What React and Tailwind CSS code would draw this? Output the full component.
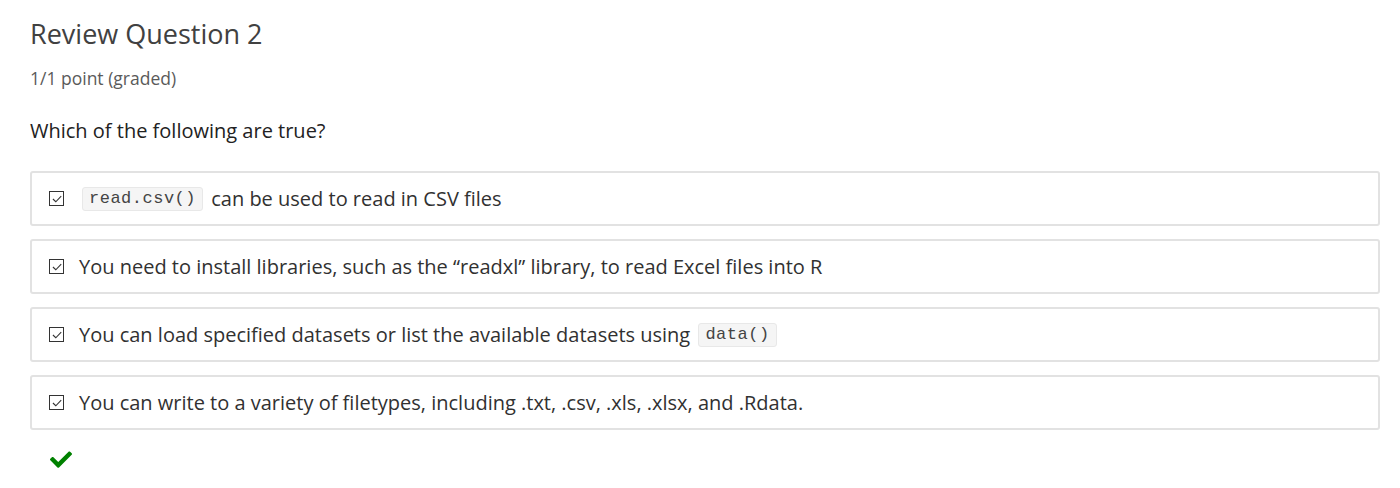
const options = [
  { id: 1, parts: [{ code: 'read.csv()' }, ' can be used to read in CSV files'] },
  { id: 2, parts: ['You need to install libraries, such as the \u201creadxl\u201d library, to read Excel files into R'] },
  { id: 3, parts: ['You can load specified datasets or list the available datasets using ', { code: 'data()' }] },
  { id: 4, parts: ['You can write to a variety of filetypes, including .txt, .csv, .xls, .xlsx, and .Rdata.'] },
]

function CheckBox() {
  return (
    <span className="flex h-[15px] w-[15px] shrink-0 items-center justify-center border border-[#333] bg-white">
      <svg width="12" height="12" viewBox="0 0 10 10" fill="none">
        <path d="M1.6 5 L4 7.3 L8.5 2.6" stroke="#333" strokeWidth="0.9" />
      </svg>
    </span>
  )
}

function Code({ children }) {
  return (
    <code className="mx-[3px] rounded-[3px] border border-[#e8e8e8] bg-[#f5f5f5] px-[6px] py-[2px] text-[17px] leading-[18px] text-[#444] tracking-[0.5px] [font-family:'Liberation_Mono',monospace]">
      {children}
    </code>
  )
}

export default function App() {
  return (
    <div className="min-h-screen bg-white px-[30px] pt-[14px] [font-family:'Open_Sans',sans-serif]">
      <h2 className="text-[27px] leading-[40px] text-[#414141]">Review Question 2</h2>
      <div className="mt-[12px] text-[17.5px] leading-[24px] text-[#5a5a5a]">1/1 point (graded)</div>
      <p className="mt-[27px] text-[20px] leading-[28px] text-[#222]">Which of the following are true?</p>

      <div className="mt-[26px] flex w-[1350px] flex-col gap-[13px]">
        {options.map((opt) => (
          <label
            key={opt.id}
            className="flex h-[55px] items-center rounded-[3px] border-2 border-[#e2e2e2] pl-[17px] text-[20px] text-[#313131]"
          >
            <CheckBox />
            <span className="ml-[15px] flex items-center whitespace-pre">
              {opt.parts.map((p, i) =>
                typeof p === 'string' ? <span key={i}>{p}</span> : <Code key={i}>{p.code}</Code>
              )}
            </span>
          </label>
        ))}
      </div>

      <div className="mt-[21px] pl-[20px]">
        <svg width="22" height="17" viewBox="0 0 512 390" fill="#008100">
          <path d="M173.9 381.4L7.5 215c-10-10-10-26.2 0-36.2l36.2-36.2c10-10 26.2-10 36.2 0L192 254.7 432.1 14.6c10-10 26.2-10 36.2 0l36.2 36.2c10 10 10 26.2 0 36.2L210.1 381.4c-10 10-26.2 10-36.2 0z" />
        </svg>
      </div>
    </div>
  )
}
